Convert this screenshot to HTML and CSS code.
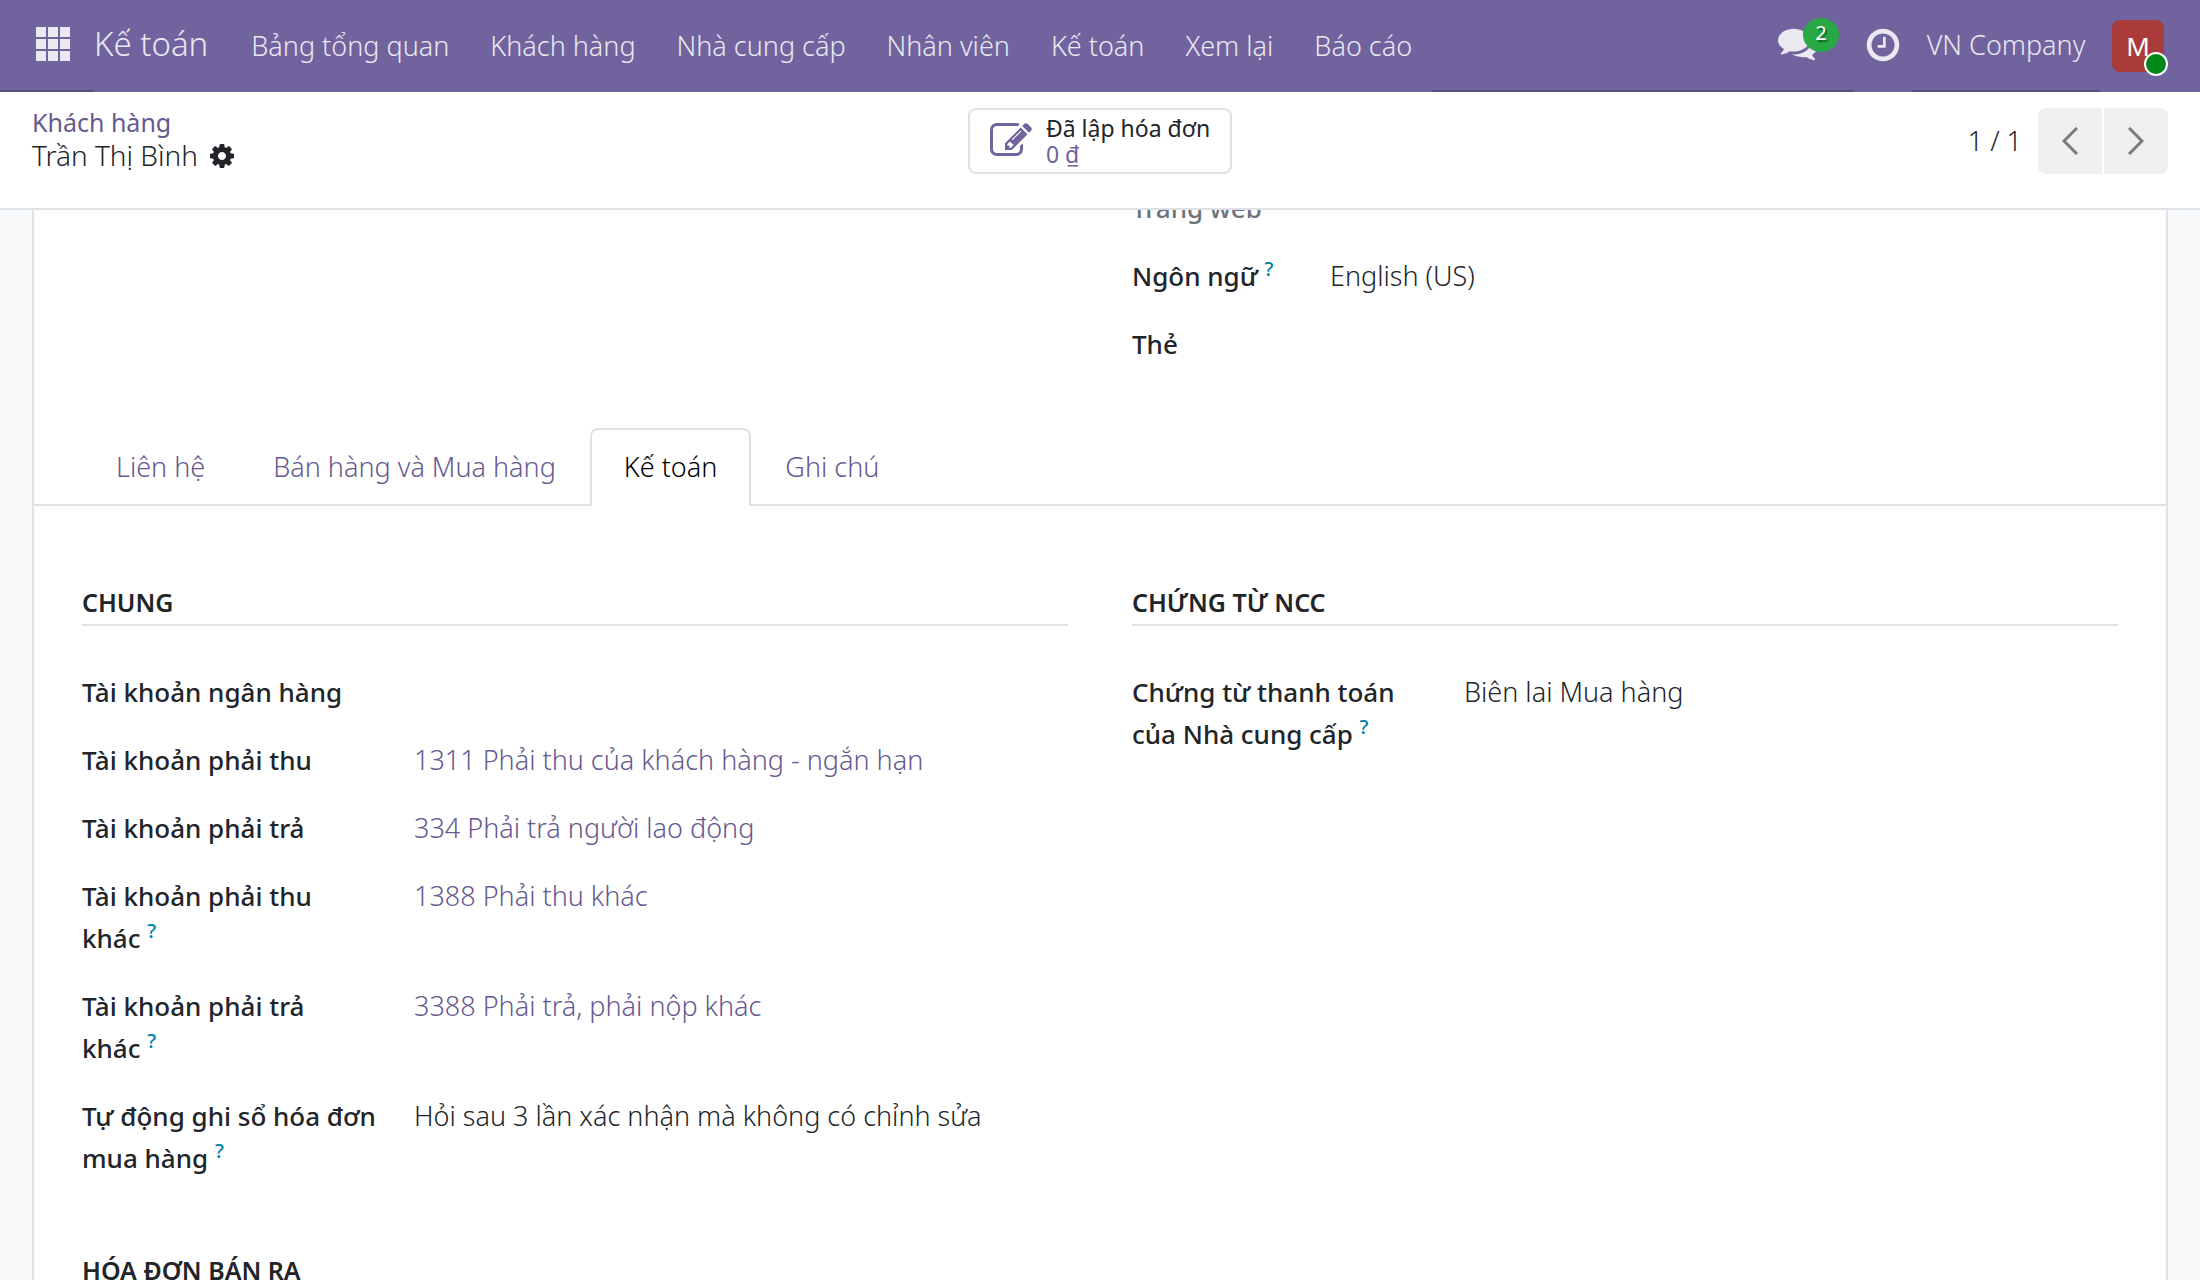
FILE: index.html
```html
<!DOCTYPE html>
<html lang="vi">
<head>
  <meta charset="utf-8">
  <title>Kế toán - Trần Thị Bình</title>
  <link rel="stylesheet" href="styles.css">
</head>
<body>
  <header class="navbar">
    <button class="apps" aria-label="Apps">
      <svg width="34" height="34" viewBox="0 0 34 34"><path d="M0 0h10v10H0zM12 0h10v10H12zM24 0h10v10H24zM0 12h10v10H0zM12 12h10v10H12zM24 12h10v10H24zM0 24h10v10H0zM12 24h10v10H12zM24 24h10v10H24z"/></svg>
    </button>
    <nav class="menu">
      <a class="brand" href="#">Kế toán</a>
      <a href="#">Bảng tổng quan</a>
      <a href="#">Khách hàng</a>
      <a href="#">Nhà cung cấp</a>
      <a href="#">Nhân viên</a>
      <a href="#">Kế toán</a>
      <a href="#">Xem lại</a>
      <a href="#">Báo cáo</a>
    </nav>
    <div class="systray">
      <button class="messages" aria-label="Messages">
        <svg width="40" height="40" viewBox="0 0 1792 1792"><path d="M1408 768q0 139-94 257t-256.500 186.500-353.500 68.500q-86 0-176-16-124 88-278 128-36 9-86 16h-3q-11 0-20.500-8t-11.500-21q-1-3-1-6.500t.5-6.500 2-6l2.500-5t3.500-5.500 4-5 4.500-5 4-4.500q5-6 23-25t26-29.500 22.500-29 25-38.500 20.500-44q-124-72-195-177t-71-224q0-139 94-257t256.500-186.500 353.500-68.500 353.500 68.500 256.500 186.500 94 257zm384 256q0 120-71 224.500t-195 176.500q10 24 20.500 44t25 38.500 22.500 29 26 29.500 23 25q1 1 4 4.500t4.500 5 4 5 3.500 5.500l2.500 5t2 6 .5 6.500-1 6.500q-3 14-13 22t-22 7q-50-7-86-16-154-40-278-128-90 16-176 16-271 0-472-132 58 4 88 4 161 0 309-45t264-129q125-92 192-212t67-254q0-77-23-152 129 71 204 178t75 230z"/></svg>
        <span class="badge">2</span>
      </button>
      <button class="activities" aria-label="Activities">
        <svg width="38" height="38" viewBox="0 0 1792 1792"><path d="M1024 544v448q0 14-9 23t-23 9h-320q-14 0-23-9t-9-23v-64q0-14 9-23t23-9h224v-352q0-14 9-23t23-9h64q14 0 23 9t9 23zm416 352q0-148-73-273t-198-198-273-73-273 73-198 198-73 273 73 273 198 198 273 73 273-73 198-198 73-273zm224 0q0 209-103 385.500t-279.500 279.500-385.500 103-385.500-103-279.500-279.500-103-385.500 103-385.500 279.500-279.500 385.500-103 385.500 103 279.500 279.500 103 385.500z"/></svg>
      </button>
      <button class="company">VN Company</button>
      <button class="user" aria-label="User menu">
        <span class="avatar">M<i class="status"></i></span>
      </button>
    </div>
  </header>

  <div class="control-panel">
    <div class="breadcrumb">
      <a href="#">Khách hàng</a>
      <div class="current">
        <span>Trần Thị Bình</span>
        <button class="cog" aria-label="Actions">
          <svg width="28" height="28" viewBox="0 0 1792 1792"><path d="M1152 896q0-106-75-181t-181-75-181 75-75 181 75 181 181 75 181-75 75-181zm512-109v222q0 12-8 23t-20 13l-185 28q-19 54-39 91 35 50 107 138 10 12 10 25t-9 23q-27 37-99 108t-94 71q-12 0-26-9l-138-108q-44 23-91 38-16 136-29 186-7 28-36 28h-222q-14 0-24.500-8.500t-11.500-21.500l-28-184q-49-16-90-37l-141 107q-10 9-25 9-14 0-25-11-126-114-165-168-7-10-7-23 0-12 8-23 15-21 51-66.500t54-70.500q-27-50-41-99l-183-27q-13-2-21-12.500t-8-23.500v-222q0-12 8-23t19-13l186-28q14-46 39-92-40-57-107-138-10-12-10-24 0-10 9-23 26-36 98.500-107.500t94.500-71.500q13 0 26 10l138 107q44-23 91-38 16-136 29-186 7-28 36-28h222q14 0 24.500 8.500t11.500 21.500l28 184q49 16 90 37l142-107q9-9 24-9 13 0 25 10 129 119 165 170 7 8 7 22 0 12-8 23-15 21-51 66.500t-54 70.500q26 50 41 98l183 28q13 2 21 12.500t8 23.500z"/></svg>
        </button>
      </div>
    </div>
    <button class="stat-button">
      <svg width="42" height="42" viewBox="0 0 1792 1792"><path d="M888 1184l116-116-152-152-116 116v56h96v96h56zm440-720q-16-16-33 1l-350 350q-17 17-1 33t33-1l350-350q17-17 1-33zm80 594v190q0 119-84.500 203.500t-203.500 84.500h-832q-119 0-203.500-84.500t-84.500-203.500v-832q0-119 84.500-203.500t203.500-84.500h832q63 0 117 25 15 7 18 23 3 17-9 29l-49 49q-14 14-32 8-23-6-45-6h-832q-66 0-113 47t-47 113v832q0 66 47 113t113 47h832q66 0 113-47t47-113v-126q0-13 9-22l64-64q15-15 35-7t20 29zm-96-738l288 288-672 672h-288v-288zm444 132l-92 92-288-288 92-92q28-28 68-28t68 28l152 152q28 28 28 68t-28 68z"/></svg>
      <span class="stat-info">
        <span>Đã lập hóa đơn</span>
        <span class="stat-value">0 ₫</span>
      </span>
    </button>
    <div class="pager">
      <span>1 / 1</span>
      <div class="pager-buttons">
        <button aria-label="Previous"><svg width="16" height="28" viewBox="0 0 16 28"><path d="M15 1L2 14l13 13"/></svg></button>
        <button aria-label="Next"><svg width="16" height="28" viewBox="0 0 16 28"><path d="M1 1l13 13L1 27"/></svg></button>
      </div>
    </div>
  </div>

  <main class="content">
    <div class="sheet">
      <div class="columns">
        <div class="group"></div>
        <dl class="group fields fields-short">
          <dt class="muted">Trang web</dt><dd></dd>
          <dt>Ngôn ngữ <sup>?</sup></dt><dd>English (US)</dd>
          <dt>Thẻ</dt><dd></dd>
        </dl>
      </div>

      <div class="tabs" role="tablist">
        <button class="tab" role="tab">Liên hệ</button>
        <button class="tab" role="tab">Bán hàng và Mua hàng</button>
        <button class="tab active" role="tab" aria-selected="true">Kế toán</button>
        <button class="tab" role="tab">Ghi chú</button>
      </div>

      <div class="columns tab-content">
        <section class="group">
          <h2>Chung</h2>
          <dl class="fields">
            <dt>Tài khoản ngân hàng</dt><dd></dd>
            <dt>Tài khoản phải thu</dt><dd><a href="#">1311 Phải thu của khách hàng - ngắn hạn</a></dd>
            <dt>Tài khoản phải trả</dt><dd><a href="#">334 Phải trả người lao động</a></dd>
            <dt>Tài khoản phải thu<br>khác <sup>?</sup></dt><dd><a href="#">1388 Phải thu khác</a></dd>
            <dt>Tài khoản phải trả<br>khác <sup>?</sup></dt><dd><a href="#">3388 Phải trả, phải nộp khác</a></dd>
            <dt>Tự động ghi sổ hóa đơn<br>mua hàng <sup>?</sup></dt><dd>Hỏi sau 3 lần xác nhận mà không có chỉnh sửa</dd>
          </dl>
        </section>
        <section class="group">
          <h2>Chứng từ NCC</h2>
          <dl class="fields">
            <dt>Chứng từ thanh toán<br>của Nhà cung cấp <sup>?</sup></dt><dd>Biên lai Mua hàng</dd>
          </dl>
        </section>
        <section class="group">
          <h2>Hóa đơn bán ra</h2>
        </section>
      </div>
    </div>
  </main>
</body>
</html>
```
FILE: styles.css
```css
* {
    margin: 0;
    padding: 0;
    box-sizing: border-box;
}

body {
    display: flex;
    flex-direction: column;
    height: 100vh;
    overflow: hidden;
    background: #f8f9fa;
    color: #212529;
    font-family: "Noto Sans", "Open Sans", sans-serif;
    font-size: 27px;
    font-weight: 300;
    line-height: 42px;
}

a {
    color: #66598f;
    text-decoration: none;
}

button {
    border: 0;
    background: none;
    color: inherit;
    font: inherit;
    cursor: pointer;
}

svg {
    display: block;
    fill: currentColor;
}

/* top bar */
.navbar {
    display: flex;
    flex: none;
    height: 92px;
    background: #71639e;
    border-bottom: 2px solid #5a4f7f;
    color: #eae8f0;
}

.navbar a {
    color: inherit;
}

.apps {
    width: 94px;
    padding: 0 24px 2px 36px;
}

.menu,
.activities,
.user {
    margin-bottom: -2px;
    background: #71639e;
}

.menu {
    display: flex;
    align-items: center;
    gap: 1px;
    white-space: nowrap;
}

.menu a {
    padding: 0 20px;
}

.menu .brand {
    padding: 0 22px 4px 0;
    font-size: 33px;
}

.systray {
    display: flex;
    margin-left: auto;
}

.messages {
    position: relative;
    width: 76px;
    padding-bottom: 4px;
}

.badge {
    position: absolute;
    top: 18px;
    left: 25px;
    width: 36px;
    height: 34px;
    border-radius: 50%;
    background: #28a745;
    color: #fff;
    font-size: 20px;
    font-weight: 400;
    line-height: 30px;
    text-shadow: 2px 2px 1px rgba(0, 0, 0, 0.4);
}

.activities {
    width: 58px;
    padding: 0 10px 2px;
}

.company {
    width: 188px;
}

.user {
    width: 100px;
    padding-left: 12px;
}

.avatar {
    display: block;
    position: relative;
    width: 52px;
    height: 52px;
    border-radius: 8px;
    background: #a93b3b;
    color: #fff;
    font-size: 26px;
    font-weight: 400;
    line-height: 52px;
}

.status {
    position: absolute;
    right: -4px;
    bottom: -4px;
    width: 24px;
    height: 24px;
    border: 2px solid #fff;
    border-radius: 50%;
    background: #018717;
}

/* breadcrumb, stat button and pager */
.control-panel {
    display: grid;
    flex: none;
    grid-template-columns: 1fr auto 1fr;
    align-items: start;
    height: 118px;
    padding: 14px 32px;
    background: #fff;
    border-bottom: 2px solid #dee2e6;
}

.breadcrumb {
    line-height: 33px;
}

.breadcrumb a {
    display: block;
    font-size: 25px;
    font-weight: 400;
}

.current {
    display: flex;
    align-items: center;
    gap: 10px;
    font-size: 28px;
}

.stat-button,
.pager {
    margin-top: 2px;
}

.stat-button {
    display: flex;
    align-items: center;
    gap: 14px;
    height: 66px;
    padding: 0 20px;
    border: 2px solid #dee2e6;
    border-radius: 8px;
    text-align: left;
}

.stat-button svg {
    color: #71639e;
}

.stat-info {
    display: flex;
    flex-direction: column;
    font-size: 23px;
    font-weight: 400;
    line-height: 26px;
}

.stat-value {
    color: #71639e;
}

.pager {
    display: flex;
    align-items: center;
    justify-content: flex-end;
    gap: 16px;
}

.pager-buttons {
    display: flex;
    gap: 2px;
}

.pager-buttons button {
    width: 64px;
    height: 66px;
    padding: 0 24px;
    border-radius: 8px 0 0 8px;
    background: #edeff1;
}

.pager-buttons button:last-child {
    border-radius: 0 8px 8px 0;
}

.pager-buttons svg {
    fill: none;
    stroke: #7a7a7a;
    stroke-width: 3px;
}

/* form sheet */
.content {
    flex: 1;
    overflow: hidden;
    padding: 0 32px;
}

/* pulled up so the first row slides under the control panel */
.sheet {
    min-height: 100%;
    margin-top: -23px;
    background: #fff;
    border: 2px solid #dee2e6;
    border-width: 0 2px;
}

.columns {
    display: grid;
    grid-template-columns: 1fr 1fr;
    gap: 71px 64px;
    padding: 0 48px;
}

.fields {
    display: grid;
    grid-template-columns: 300px 1fr;
    gap: 26px 32px;
    align-content: start;
}

.fields-short {
    grid-template-columns: 166px 1fr;
}

.fields dt {
    font-size: 26px;
    font-weight: 500;
    white-space: nowrap;
}

.fields dd {
    min-height: 42px;
}

.fields .muted {
    color: #6c757d;
}

sup {
    color: #0180a5;
    font-size: 20px;
    line-height: 0;
}

.tabs {
    display: flex;
    margin-top: 63px;
    padding: 0 48px;
    border-bottom: 2px solid #dee2e6;
}

.tab {
    height: 78px;
    margin-bottom: -2px;
    padding: 0 32px 2px;
    border: 2px solid transparent;
    border-bottom: 0;
    border-radius: 8px 8px 0 0;
    color: #66598f;
}

.tab.active {
    border-color: #dee2e6;
    background: #fff;
    color: #000;
}

.tab-content {
    padding-top: 76px;
}

h2 {
    margin-bottom: 45px;
    padding-bottom: 2px;
    border-bottom: 2px solid #e2e2e2;
    font-size: 25px;
    font-weight: 600;
    line-height: 40px;
    text-transform: uppercase;
}
```
